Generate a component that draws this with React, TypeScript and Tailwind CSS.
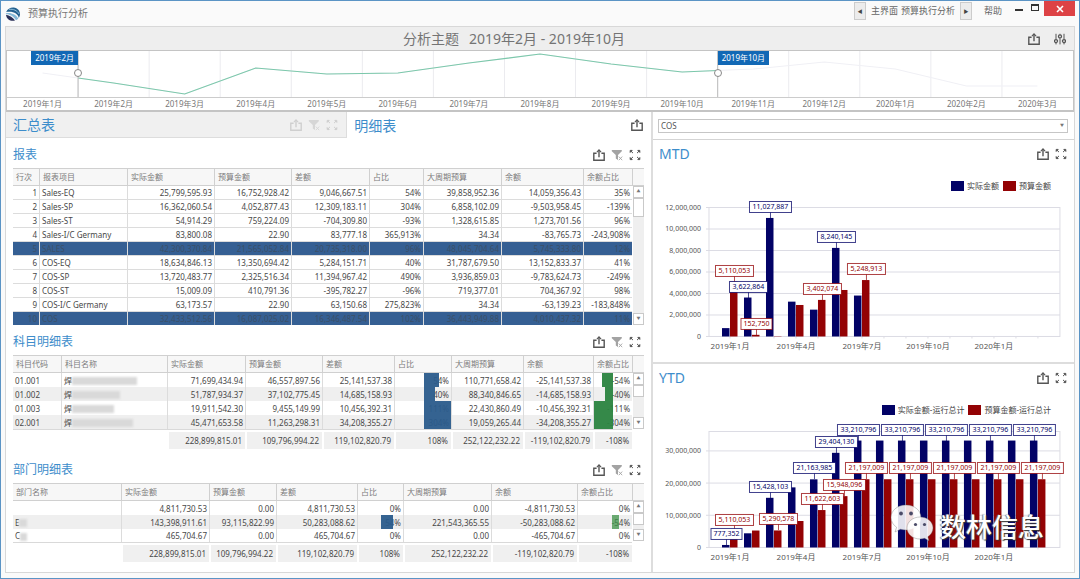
import type { ReactNode } from "react";
import clsx from "clsx";

const MONTHS = [
  "2019年1月", "2019年2月", "2019年3月", "2019年4月", "2019年5月",
  "2019年6月", "2019年7月", "2019年8月", "2019年9月", "2019年10月",
  "2019年11月", "2019年12月", "2020年1月", "2020年2月", "2020年3月",
];

const NAVY = "#020266";
const RED = "#930204";

/* ---------- icons ---------- */

function ShareIcon() {
  return (
    <svg viewBox="0 0 12 12" className="w-3 h-3" fill="none" stroke="currentColor" strokeWidth="1.4">
      <path d="M3.6 4.2H.8v7h10.4v-7H8.4" />
      <path d="M6 8.2V1.4" />
      <path d="M3.9 3.2 6 .9l2.1 2.3" strokeWidth="1.1" />
    </svg>
  );
}

function FilterIcon() {
  return (
    <svg viewBox="0 0 12 12" className="w-3 h-3">
      <path d="M.8 1h10v1.2L7 6v5L4.8 9.6V6L.8 2.2z" fill="currentColor" />
      <path d="M7.8 7.6l3.4 3.6M11.2 7.6l-3.4 3.6" stroke="currentColor" strokeWidth="0.9" />
    </svg>
  );
}

function ExpandIcon() {
  return (
    <svg viewBox="0 0 12 12" className="w-3 h-3" fill="currentColor" stroke="currentColor">
      <path d="M1.200 1.400h2L1.200 3.400zM2 2.200l2 1.900" strokeWidth="1" />
      <path d="M10.800 1.400h-2l2 2zM10 2.200 8 4.100" strokeWidth="1" />
      <path d="M1.200 10.600h2l-2-2zM2 9.800l2-1.900" strokeWidth="1" />
      <path d="M10.800 10.600h-2l2-2zM10 9.800 8 7.900" strokeWidth="1" />
    </svg>
  );
}

function SlidersIcon() {
  return (
    <svg viewBox="0 0 12 12" className="w-3 h-3" fill="none" stroke="currentColor" strokeWidth="1">
      <path d="M2 .8v5.6M2 10v1.4M6 .8v.8M6 5.2v6.2M10 .8v5.6M10 10v1.4" />
      <circle cx="2" cy="8.1" r="1.5" strokeWidth="1.3" />
      <circle cx="6" cy="3.4" r="1.5" strokeWidth="1.3" />
      <circle cx="10" cy="8.1" r="1.5" strokeWidth="1.3" />
    </svg>
  );
}

function Logo() {
  return (
    <svg viewBox="0 0 16 16" className="w-4 h-4">
      <path d="M1.200 6C2.500 2.800 5.500 1.200 8.600 1.400c4 .3 6.600 3.400 6.400 7.200-.1 1.300-.5 2.500-1.200 3.500C13.400 7.500 7.500 4.600 1.200 6z" fill="#24618f" />
      <path d="M4.200 3.500c4-.8 8 1 9.800 4.400" fill="none" stroke="#9cc8e2" strokeWidth="0.9" />
      <path d="M.9 7.200C6 6 11 8.400 13.400 12.500c-.7.800-1.500 1.300-2.400 1.700C9 10.600 5 8.300.9 8z" fill="#86b9d8" />
      <path d="M1 8.700c3.600.5 7 2.700 9 5.800-4.300 1.300-8.600-1.400-9-5.800z" fill="#2b3158" />
    </svg>
  );
}

function IconButton({ label, children }: { label: string; children: ReactNode }) {
  return (
    <button type="button" aria-label={label} className="block">
      {children}
    </button>
  );
}

function PanelTools({ filter = false, muted = false }: { filter?: boolean; muted?: boolean }) {
  return (
    <div className={clsx("flex items-center gap-[6px]", muted ? "text-[#cfcfcf]" : "text-[#555]")}>
      <IconButton label="导出"><ShareIcon /></IconButton>
      {filter && (
        <span className={muted ? "text-[#d6d6d6]" : "text-[#a3a3a3]"}>
          <IconButton label="清除筛选"><FilterIcon /></IconButton>
        </span>
      )}
      <IconButton label="最大化"><ExpandIcon /></IconButton>
    </div>
  );
}

/* ---------- title bar and range selector ---------- */

function TitleBar() {
  return (
    <div className="flex items-start justify-between h-[25px] pl-1">
      <div className="flex items-center gap-[7px] h-[25px] text-[10px] text-[#777]">
        <Logo />
        <span>预算执行分析</span>
      </div>
      <div className="flex items-start text-[9px] text-[#666]">
        <button type="button" aria-label="向左" className="w-3 h-[18px] mt-px border border-[#ccc] bg-[#ececec] text-[5px] leading-[16px] text-[#444]">◀</button>
        <nav className="flex gap-[3px] px-[5px] leading-[20px]">
          <a href="#main">主界面</a>
          <a href="#budget">预算执行分析</a>
        </nav>
        <button type="button" aria-label="向右" className="w-3 h-[18px] mt-px border border-[#ccc] bg-[#ececec] text-[5px] leading-[16px] text-[#444]">▶</button>
        <a href="#help" className="ml-3 mr-[13px] leading-[20px]">帮助</a>
        <button type="button" aria-label="最小化" className="w-[8px] h-[2px] mt-[8px] mr-2 bg-[#333]" />
        <button type="button" aria-label="还原" className="w-[8px] h-[7px] mt-[3px] mr-[5px] border border-t-2 border-[#333]" />
        <button type="button" aria-label="关闭" className="flex items-center justify-center w-[31px] h-[15px] mr-1 bg-[#dd4245]">
          <svg viewBox="0 0 8 8" className="w-2 h-2" stroke="#fff" strokeWidth="1.6">
            <path d="M1 1l6 6M7 1 1 7" />
          </svg>
        </button>
      </div>
    </div>
  );
}

const RANGE_Y = [22, 32, 43, 17, 23, 22, 12, 3, 13, 21, 18, 11, 18, 35, 35];

function RangeSelector() {
  const points = RANGE_Y.map((y, i) => `${i * 71 + 35.5},${y}`);
  return (
    <div className="border border-[#c4c4c4] border-b-2 bg-white">
      <div className="relative h-[46px]">
        <svg viewBox="0 0 1065 46" preserveAspectRatio="none" className="w-full h-full">
          {MONTHS.slice(1).map((m, i) => (
            <path key={m} d={`M${(i + 1) * 71} 0V46`} stroke="#ebebef" />
          ))}
          <polyline points={points.join(" ")} fill="none" stroke="#f0f0f5" />
          <polyline
            points={["71,27", ...points.slice(1, 10), "710,19.500"].join(" ")}
            fill="none"
            stroke="#7cc8ab"
            strokeWidth="1.2"
          />
          <path d="M71 0V46M710 0V46" stroke="#bdbdbd" />
        </svg>
        <span className="absolute top-0 right-[93.333%] px-[4px] bg-[#1268b5] text-white text-[8px] leading-[14px]">2019年2月</span>
        <span className="absolute top-0 left-[66.667%] px-[4px] bg-[#1268b5] text-white text-[8px] leading-[14px]">2019年10月</span>
        <span className="absolute top-[18px] left-[6.667%] w-[8px] h-[8px] -ml-1 rounded-full border border-[#888] bg-white" />
        <span className="absolute top-[18px] left-[66.667%] w-[8px] h-[8px] -ml-1 rounded-full border border-[#888] bg-white" />
      </div>
      <div className="grid grid-cols-15 border-t border-[#ccc] text-center text-[8px] leading-[12px] text-[#777]">
        {MONTHS.map((m) => (
          <span key={m}>{m}</span>
        ))}
      </div>
    </div>
  );
}

/* ---------- tables ---------- */

type Bar = { from: number; width: number; color: "blue" | "green" | "lightGreen" };
type Cell = string | { text: string; bar?: Bar; mask?: number };

type TableProps = {
  title: string;
  headers: string[];
  widths: number[];
  leftCols: number[];
  rows: Cell[][];
  totals?: string[];
  highlight?: number[];
  striped?: boolean;
  track: string;
  thumb: string;
};

const BAR_COLORS = {
  blue: "bg-[#2a5b8b]/95",
  green: "bg-[#2a833f]/95",
  lightGreen: "bg-[#3d9147]/75",
};

function DataCell({ cell, left, first, ruled }: { cell: Cell; left: boolean; first: boolean; ruled: boolean }) {
  const { text, bar, mask } = typeof cell === "string" ? { text: cell, bar: undefined, mask: undefined } : cell;
  return (
    <td
      className={clsx(
        "relative p-0 px-[2px] pt-px whitespace-nowrap overflow-hidden border-[#dcdcdc]",
        !first && "border-l",
        ruled && "border-b",
        left ? "text-left" : "text-right",
      )}
    >
      {text}
      {mask !== undefined && (
        <span className="inline-block h-[8px] align-middle bg-[#d9d9d9] blur-[1px]" style={{ width: `${mask}%` }} />
      )}
      {bar && (
        <span
          className={clsx("absolute inset-y-0", BAR_COLORS[bar.color])}
          style={{ left: `${bar.from}%`, width: `${bar.width}%` }}
        />
      )}
    </td>
  );
}

function Scrollbar({ track, thumb }: { track: string; thumb: string }) {
  return (
    <div className="w-3 shrink-0">
      <div className="h-[18px] border-y border-l border-[#d0d0d0] bg-[#f7f7f7]" />
      <div className={clsx("flex flex-col ml-px bg-[#efefef]", track)}>
        <button type="button" aria-label="向上滚动" className="h-3 shrink-0 border border-[#c9c9c9] bg-white text-[4px] leading-[10px] text-[#777]">▲</button>
        <div className={clsx("border border-[#c9c9c9] bg-white", thumb)} />
        <button type="button" aria-label="向下滚动" className="h-3 mt-auto shrink-0 border border-[#c9c9c9] bg-white text-[4px] leading-[10px] text-[#777]">▼</button>
      </div>
    </div>
  );
}

function DataTable({ title, headers, widths, leftCols, rows, totals, highlight = [], striped = false, track, thumb }: TableProps) {
  const total = widths.reduce((a, b) => a + b, 0);
  return (
    <section className="pl-[7px] pr-[7px]">
      <div className="flex items-center justify-between h-[30px] pt-[4px] pr-[3px]">
        <h3 className="text-[12px] text-[#3d8dcb]">{title}</h3>
        <PanelTools filter />
      </div>
      <div className="flex items-start">
        <table className="flex-1 w-full table-fixed border-separate border-spacing-0 text-[8px] leading-[12px] text-[#484848]">
          <colgroup>
            {widths.map((w, i) => (
              <col key={i} style={{ width: `${(w / total) * 100}%` }} />
            ))}
          </colgroup>
          <thead>
            <tr className="h-[18px] text-left text-[#7c7c7c]">
              {headers.map((h, i) => (
                <th
                  key={h}
                  className={clsx(
                    "p-0 px-[3px] font-normal whitespace-nowrap border-y border-[#d0d0d0] bg-[#f7f7f7]",
                    i > 0 && "border-l",
                  )}
                >
                  {h}
                </th>
              ))}
            </tr>
          </thead>
          <tbody>
            {rows.map((row, r) => (
              <tr
                key={r}
                className={clsx(
                  r === rows.length - 1 && rows.length !== 4 ? "h-[13px]" : "h-[14px]",
                  highlight.includes(r) && "bg-[#355f93] text-[#3b4f68]",
                  striped && r % 2 === 1 && "bg-[#efefef]",
                )}
              >
                {row.map((cell, i) => (
                  <DataCell
                    key={i}
                    cell={cell}
                    left={leftCols.includes(i)}
                    first={i === 0}
                    ruled={!striped && r < rows.length - 1}
                  />
                ))}
              </tr>
            ))}
          </tbody>
          {totals && (
            <tfoot>
              <tr className="h-[3px]">
                <td colSpan={widths.length} className="p-0 border-t border-[#d9d9d9]" />
              </tr>
              <tr className="h-[17px]">
                {totals.map((t, i) => (
                  <td
                    key={i}
                    className={clsx("p-0 pr-[3px] text-right whitespace-nowrap", t && "bg-[#f0f0f0] border-l-2 border-white")}
                  >
                    {t}
                  </td>
                ))}
              </tr>
            </tfoot>
          )}
        </table>
        <Scrollbar track={track} thumb={thumb} />
      </div>
    </section>
  );
}

const REPORT_ROWS: Cell[][] = [
  ["1", "Sales-EQ", "25,799,595.93", "16,752,928.42", "9,046,667.51", "54%", "39,858,952.36", "14,059,356.43", "35%"],
  ["2", "Sales-SP", "16,362,060.54", "4,052,877.43", "12,309,183.11", "304%", "6,858,102.09", "-9,503,958.45", "-139%"],
  ["3", "Sales-ST", "54,914.29", "759,224.09", "-704,309.80", "-93%", "1,328,615.85", "1,273,701.56", "96%"],
  ["4", "Sales-I/C Germany", "83,800.08", "22.90", "83,777.18", "365,913%", "34.34", "-83,765.73", "-243,908%"],
  ["5", "SALES", "42,300,370.84", "21,565,052.84", "20,735,318.00", "96%", "48,045,704.64", "5,745,333.80", "12%"],
  ["6", "COS-EQ", "18,634,846.13", "13,350,694.42", "5,284,151.71", "40%", "31,787,679.50", "13,152,833.37", "41%"],
  ["7", "COS-SP", "13,720,483.77", "2,325,516.34", "11,394,967.42", "490%", "3,936,859.03", "-9,783,624.73", "-249%"],
  ["8", "COS-ST", "15,009.09", "410,791.36", "-395,782.27", "-96%", "719,377.01", "704,367.92", "98%"],
  ["9", "COS-I/C Germany", "63,173.57", "22.90", "63,150.68", "275,823%", "34.34", "-63,139.23", "-183,848%"],
  ["10", "COS", "32,433,512.56", "16,087,025.02", "16,346,487.54", "102%", "36,443,949.88", "4,010,437.32", "11%"],
];

const blue = (text: string, width: number): Cell => ({ text, bar: { from: 51, width, color: "blue" } });
const green = (text: string, from: number, width: number): Cell => ({ text, bar: { from, width, color: "green" } });

const ACCOUNT_ROWS: Cell[][] = [
  ["01.001", { text: "焊", mask: 64 }, "71,699,434.94", "46,557,897.56", "25,141,537.38", blue("54%", 27), "110,771,658.42", "-25,141,537.38", green("-54%", 22, 28)],
  ["01.002", { text: "焊", mask: 48 }, "51,787,934.37", "37,102,775.45", "14,685,158.93", blue("40%", 20), "88,340,846.65", "-14,685,158.93", green("-40%", 30, 20)],
  ["01.003", { text: "焊", mask: 42 }, "19,911,542.30", "9,455,149.99", "10,456,392.31", blue("111%", 49), "22,430,860.49", "-10,456,392.31", green("-111%", 0, 50)],
  ["02.001", { text: "焊", mask: 60 }, "45,471,653.58", "11,263,298.31", "34,208,355.27", blue("304%", 49), "19,059,265.44", "-34,208,355.27", green("-304%", 0, 50)],
];

const DEPT_ROWS: Cell[][] = [
  ["", "4,811,730.53", "0.00", "4,811,730.53", "0%", "0.00", "-4,811,730.53", "0%"],
  [{ text: "E", mask: 7 }, "143,398,911.61", "93,115,822.99", "50,283,088.62", blue("54%", 27), "221,543,365.55", "-50,283,088.62", { text: "-54%", bar: { from: 63, width: 13, color: "lightGreen" } }],
  [{ text: "C", mask: 7 }, "465,704.67", "0.00", "465,704.67", "0%", "0.00", "-465,704.67", "0%"],
];

const VALUE_HEADERS = ["实际金额", "预算金额", "差额", "占比", "大周期预算", "余额", "余额占比"];

/* ---------- charts ---------- */

type Series = { actual: number[]; budget: number[]; actualLabels: number[]; budgetLabels: number[] };

type ChartProps = Series & {
  height: number;
  top: number;
  base: number;
  perMillion: number;
  ticks: number[];
};

const LEFT = 56;
const RIGHT = 407;
const PITCH = 22;

function BarChart({ actual, budget, actualLabels, budgetLabels, height, top, base, perMillion, ticks }: ChartProps) {
  const y = (v: number) => base - (v / 1000000) * perMillion;
  const labels = MONTHS.flatMap((_, i) => [
    ...(actualLabels.includes(i) ? [{ x: 73 + i * PITCH, value: actual[i], color: NAVY }] : []),
    ...(budgetLabels.includes(i) ? [{ x: 81 + i * PITCH, value: budget[i], color: RED }] : []),
  ]);
  // lower labels sit on top of taller neighbours at the left edge
  labels.sort((a, b) => (Math.abs(a.x - b.x) < 20 ? b.value - a.value : a.x - b.x));
  return (
    <svg viewBox={`0 0 421 ${height}`} className="block w-full h-auto">
      <rect x={LEFT} y={top} width={RIGHT - LEFT} height={base - top} fill="none" stroke="#dcdce4" />
      {ticks.map((t) => (
        <g key={t}>
          <path d={`M${LEFT - 3} ${y(t)}H${RIGHT}`} stroke="#dcdce4" />
          <text x={48} y={y(t) + 2.5} textAnchor="end" className="text-[7px]" fill="#555">
            {t.toLocaleString("en-US")}
          </text>
        </g>
      ))}
      {MONTHS.map((m, i) => (
        <g key={m}>
          <path d={`M${77 + i * PITCH} ${base}v2`} stroke="#dcdce4" />
          {actual[i] !== undefined && (
            <rect x={69 + i * PITCH} y={y(actual[i])} width={7.5} height={base - y(actual[i])} fill={NAVY} />
          )}
          {budget[i] !== undefined && (
            <rect x={77 + i * PITCH} y={y(budget[i])} width={7.5} height={base - y(budget[i])} fill={RED} />
          )}
          {i % 3 === 0 && i < 13 && (
            <text x={77 + i * PITCH} y={base + 13} textAnchor="middle" className="text-[8px]" fill="#555">
              {m}
            </text>
          )}
        </g>
      ))}
      {labels.map(({ x, value, color }) => {
        const text = value.toLocaleString("en-US");
        const w = text.length > 9 ? 42 : text.length > 7 ? 38 : 31;
        const barTop = Math.round(y(value));
        return (
          <g key={`${x}-${color}`}>
            <path d={`M${x + 0.5} ${barTop}v-6`} stroke={color} strokeOpacity="0.7" />
            <rect x={x - w / 2 + 0.5} y={barTop - 16.5} width={w} height={11} fill="#fff" stroke={color} strokeOpacity="0.75" />
            <text x={x + 0.5} y={barTop - 8.5} textAnchor="middle" className="text-[7px]" fill={color}>
              {text}
            </text>
          </g>
        );
      })}
    </svg>
  );
}

function Legend({ items }: { items: [string, string] }) {
  return (
    <div className="flex items-center justify-end gap-[3px] h-[30px] pt-[6px] pr-[23px] text-[8px] text-[#444]">
      <span className="w-[13px] h-[10px] bg-[#020266]" />
      <span className="mr-px">{items[0]}</span>
      <span className="w-[13px] h-[10px] bg-[#930204]" />
      <span>{items[1]}</span>
    </div>
  );
}

function ChartHeader({ title }: { title: string }) {
  return (
    <div className="flex items-center justify-between h-[28px] pl-[6px] pr-[7px]">
      <h3 className="text-[14px] leading-[18px] text-[#3d8dcb]">{title}</h3>
      <PanelTools />
    </div>
  );
}

function Watermark() {
  return (
    <div className="absolute right-[30px] bottom-[18px] flex items-center gap-[6px] text-[26px] leading-[36px] font-medium text-white [text-shadow:1px_1px_1px_#333,-1px_0_1px_#777]">
      <svg viewBox="0 0 44 38" className="w-[44px] h-[38px] mb-[8px]">
        <g fill="#fff" fillOpacity="0.88" stroke="#666" strokeOpacity="0.5" strokeWidth="0.7">
          <path d="M16 1C7.500 1 1 6.500 1 13.500c0 4 2.200 7.500 5.600 9.800L5 28l5.400-2.800c1.800.5 3.700.8 5.600.8 8.500 0 15-5.500 15-12.500S24.500 1 16 1z" />
          <path d="M30 13c-7.200 0-13 4.800-13 11s5.800 11 13 11c1.600 0 3.200-.3 4.600-.7l4.400 2.500-1.200-4C41 30.800 43 27.600 43 24c0-6.200-5.800-11-13-11z" />
        </g>
        <g fill="#4b4b68">
          <circle cx="11" cy="9.500" r="1.900" />
          <circle cx="21" cy="9.500" r="1.900" />
          <circle cx="25.500" cy="20.500" r="1.600" />
          <circle cx="34.500" cy="20.500" r="1.600" />
        </g>
      </svg>
      数林信息
    </div>
  );
}

const ACTUAL = [777352, 3622864, 11027887, 3240000, 2495882, 8240145, 3806666];
const BUDGET = [5110053, 152750, 27775, 2929951, 3402074, 4325493, 5248913];

const YTD_ACTUAL = [777352, 4400216, 15428103, 18668103, 21163985, 29404130, ...Array(9).fill(33210796)];
const YTD_BUDGET = [5110053, 5262803, 5290578, 8220529, 11622603, 15948096, ...Array(9).fill(21197009)];

export default function App() {
  return (
    <div className="flex flex-col min-h-screen border border-[#5b94c5] bg-[#fafafa] font-['Noto_Sans','Noto_Sans_CJK_SC',sans-serif]">
      <TitleBar />
      <main className="flex flex-col flex-1 mx-1 mb-[5px] border border-[#d8d8d8] bg-white">
        <header className="relative flex items-center justify-center h-[23px] pr-[52px] bg-[#eee] text-[#747474]">
          <h1 className="flex gap-[10px] text-[14px] leading-[20px]">
            <span>分析主题</span>
            <span>2019年2月 - 2019年10月</span>
          </h1>
          <div className="absolute inset-y-0 right-2 flex items-center gap-[14px] text-[#555]">
            <IconButton label="导出"><ShareIcon /></IconButton>
            <IconButton label="参数"><SlidersIcon /></IconButton>
          </div>
        </header>
        <RangeSelector />

        <div className="flex flex-1">
          <div className="w-[60.4%] shrink-0">
            <div className="flex h-[26px]" role="tablist">
              <div className="flex items-center justify-between w-[52.9%] pl-[7px] pr-2 bg-[#f0f0f0] border-b border-r border-[#ddd]">
                <button type="button" role="tab" aria-selected="false" className="text-[14px] text-[#3d8dcb]">汇总表</button>
                <PanelTools filter muted />
              </div>
              <div className="flex flex-1 items-center justify-between pl-[7px] pr-2 text-[#555]">
                <button type="button" role="tab" aria-selected="true" className="text-[14px] text-[#3d8dcb]">明细表</button>
                <IconButton label="导出"><ShareIcon /></IconButton>
              </div>
            </div>

            <DataTable
              title="报表"
              headers={["行次", "报表项目", ...VALUE_HEADERS]}
              widths={[26, 88, 87, 77, 78, 54, 78, 82, 49]}
              leftCols={[1]}
              rows={REPORT_ROWS}
              highlight={[4, 9]}
              track="h-[139px]"
              thumb="h-[19px]"
            />
            <DataTable
              title="科目明细表"
              headers={["科目代码", "科目名称", ...VALUE_HEADERS]}
              widths={[48, 106, 78, 77, 72, 57, 72, 70, 39]}
              leftCols={[0, 1]}
              rows={ACCOUNT_ROWS}
              totals={["", "", "228,899,815.01", "109,796,994.22", "119,102,820.79", "108%", "252,122,232.22", "-119,102,820.79", "-108%"]}
              striped
              track="h-[56px]"
              thumb="h-3"
            />
            <div className="h-[4px]" />
            <DataTable
              title="部门明细表"
              headers={["部门名称", ...VALUE_HEADERS]}
              widths={[108, 88, 67, 81, 46, 88, 86, 55]}
              leftCols={[0]}
              rows={DEPT_ROWS}
              totals={["", "228,899,815.01", "109,796,994.22", "119,102,820.79", "108%", "252,122,232.22", "-119,102,820.79", "-108%"]}
              striped
              track="h-[40px]"
              thumb="h-3"
            />
          </div>

          <div className="flex-1 border-l-2 border-[#ddd]">
            <div className="relative flex items-center h-[28px] pl-[5px] pr-[6px] border-b border-[#d4d4d4]">
              <select
                aria-label="报表类别"
                defaultValue="COS"
                className="w-full h-[14px] px-[2px] appearance-none border border-[#c6c6c6] bg-white text-[8px] leading-[12px] text-[#555]"
              >
                <option>COS</option>
                <option>SALES</option>
              </select>
              <span className="absolute right-[10px] text-[4px] text-[#777] pointer-events-none">▼</span>
            </div>
            <section className="pb-1 border-b-2 border-[#ddd]">
              <ChartHeader title="MTD" />
              <Legend items={["实际金额", "预算金额"]} />
              <BarChart
                actual={ACTUAL}
                budget={BUDGET}
                actualLabels={[1, 2, 5]}
                budgetLabels={[0, 1, 4, 6]}
                height={160}
                top={9.5}
                base={138.5}
                perMillion={10.75}
                ticks={[0, 2000000, 4000000, 6000000, 8000000, 10000000, 12000000]}
              />
            </section>
            <section className="relative">
              <ChartHeader title="YTD" />
              <Legend items={["实际金额-运行总计", "预算金额-运行总计"]} />
              <BarChart
                actual={YTD_ACTUAL}
                budget={YTD_BUDGET}
                actualLabels={[0, 2, 4, 5, 6, 8, 10, 12, 14]}
                budgetLabels={[0, 2, 4, 5, 6, 8, 10, 12, 14]}
                height={146}
                top={9.5}
                base={125.5}
                perMillion={3.22}
                ticks={[0, 10000000, 20000000, 30000000]}
              />
              <Watermark />
            </section>
          </div>
        </div>
      </main>
    </div>
  );
}
